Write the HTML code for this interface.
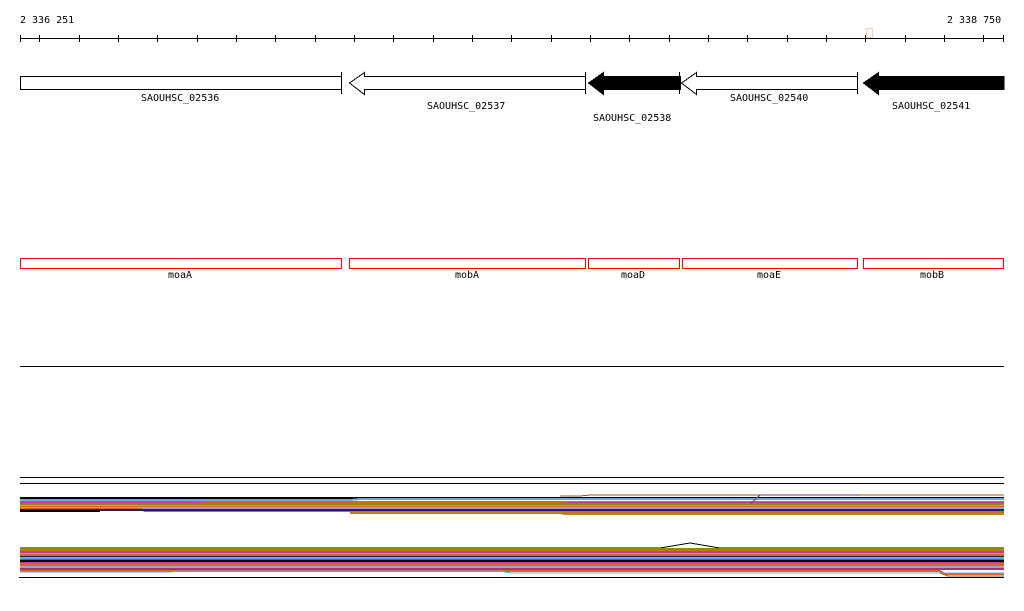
<!DOCTYPE html>
<html><head><style>
html,body{margin:0;padding:0;background:#fff;width:1024px;height:611px;overflow:hidden}
svg text{font-family:"DejaVu Sans Mono","Liberation Mono",monospace;font-size:10px;fill:#000}
</style></head><body>
<svg width="1024" height="611" xmlns="http://www.w3.org/2000/svg" shape-rendering="crispEdges">
<text x="20" y="23">2 336 251</text>
<text x="947" y="23">2 338 750</text>
<line x1="20" y1="38.5" x2="1004" y2="38.5" stroke="#000"/>
<g stroke="#000">
<line x1="20.5" y1="35" x2="20.5" y2="42"/><line x1="1003.5" y1="35" x2="1003.5" y2="42"/>
<line x1="39.5" y1="35" x2="39.5" y2="42"/><line x1="79.5" y1="35" x2="79.5" y2="42"/><line x1="118.5" y1="35" x2="118.5" y2="42"/><line x1="157.5" y1="35" x2="157.5" y2="42"/><line x1="197.5" y1="35" x2="197.5" y2="42"/><line x1="236.5" y1="35" x2="236.5" y2="42"/><line x1="275.5" y1="35" x2="275.5" y2="42"/><line x1="315.5" y1="35" x2="315.5" y2="42"/><line x1="354.5" y1="35" x2="354.5" y2="42"/><line x1="393.5" y1="35" x2="393.5" y2="42"/><line x1="433.5" y1="35" x2="433.5" y2="42"/><line x1="472.5" y1="35" x2="472.5" y2="42"/><line x1="511.5" y1="35" x2="511.5" y2="42"/><line x1="551.5" y1="35" x2="551.5" y2="42"/><line x1="590.5" y1="35" x2="590.5" y2="42"/><line x1="629.5" y1="35" x2="629.5" y2="42"/><line x1="669.5" y1="35" x2="669.5" y2="42"/><line x1="708.5" y1="35" x2="708.5" y2="42"/><line x1="747.5" y1="35" x2="747.5" y2="42"/><line x1="787.5" y1="35" x2="787.5" y2="42"/><line x1="826.5" y1="35" x2="826.5" y2="42"/><line x1="865.5" y1="35" x2="865.5" y2="42"/><line x1="905.5" y1="35" x2="905.5" y2="42"/><line x1="944.5" y1="35" x2="944.5" y2="42"/><line x1="983.5" y1="35" x2="983.5" y2="42"/>
</g>
<rect x="866.5" y="28.5" width="6" height="9" fill="none" stroke="#f4d0c8"/>
<g stroke="#000" fill="#fff">
<rect x="20.5" y="76.5" width="321" height="13"/>
<line x1="341.5" y1="72" x2="341.5" y2="94"/>
<polygon points="349.5,83 364.5,72.5 364.5,76.5 585.5,76.5 585.5,89.5 364.5,89.5 364.5,94.5"/>
<line x1="585.5" y1="72" x2="585.5" y2="94"/>
<polygon points="588.5,83 603.5,72.5 603.5,76.5 680.5,76.5 680.5,89.5 603.5,89.5 603.5,94.5" fill="#000"/>
<line x1="679.5" y1="72" x2="679.5" y2="94"/>
<polygon points="681.5,83 696.5,72.5 696.5,76.5 857.5,76.5 857.5,89.5 696.5,89.5 696.5,94.5"/>
<line x1="857.5" y1="72" x2="857.5" y2="94"/>
<polygon points="863.5,83 878.5,72.5 878.5,76.5 1004,76.5 1004,89.5 878.5,89.5 878.5,94.5" fill="#000"/>
</g>
<text x="141" y="101">SAOUHSC_02536</text>
<text x="427" y="109">SAOUHSC_02537</text>
<text x="593" y="121">SAOUHSC_02538</text>
<text x="730" y="101">SAOUHSC_02540</text>
<text x="892" y="109">SAOUHSC_02541</text>
<g stroke="#f00" fill="none">
<rect x="20.5" y="258.5" width="321" height="10"/>
<rect x="349.5" y="258.5" width="236" height="10"/>
<rect x="588.5" y="258.5" width="91" height="10"/>
<rect x="682.5" y="258.5" width="175" height="10"/>
<rect x="863.5" y="258.5" width="140" height="10"/>
</g>
<text x="168" y="278">moaA</text>
<text x="455" y="278">mobA</text>
<text x="621" y="278">moaD</text>
<text x="757" y="278">moaE</text>
<text x="920" y="278">mobB</text>
<g stroke="#000">
<line x1="20" y1="366.5" x2="1004" y2="366.5"/>
<line x1="20" y1="477.5" x2="1004" y2="477.5"/>
<line x1="20" y1="483.5" x2="1004" y2="483.5"/>
<line x1="19" y1="577.5" x2="1004" y2="577.5"/>
</g>
<g stroke-width="2" fill="none">
<path d="M20 498H1004" stroke="#000"/>
<path d="M20 500H350L360 499H1004" stroke="#6aa8e0"/>
<path d="M20 502H1004" stroke="#d2691e"/>
<path d="M20 503H200L210 504H560L570 503H1004" stroke="#c04090"/>
<path d="M20 504H1004" stroke="#8b8b10"/>
<path d="M20 506H1004" stroke="#7bd030"/>
<path d="M20 507H1004" stroke="#e06030"/>
<path d="M20 508H1004" stroke="#a0a0d0"/>
<path d="M20 509H140L145 511H350L360 512H1004" stroke="#d2691e"/>
<path d="M20 510H1004" stroke="#20205a"/>
<path d="M350 513H560L565 514H1004" stroke="#b8860b"/>
<path d="M20 511H100" stroke="#000"/>
<path d="M560 496H580L590 495H1004" stroke="#8b5a2b" stroke-width="1"/>
<path d="M750 504L760 495H860" stroke="#704060" stroke-width="1"/>
</g>
<g stroke-width="2" fill="none">
<path d="M20 548H660L690 543L720 548H1004" stroke="#000" stroke-width="1"/>
<path d="M20 549H1004" stroke="#8b8b10"/>
<path d="M20 551H1004" stroke="#d2691e"/>
<path d="M20 552H1004" stroke="#c04090"/>
<path d="M20 554H1004" stroke="#7bd030"/>
<path d="M20 555H1004" stroke="#e06030"/>
<path d="M20 557H1004" stroke="#20205a"/>
<path d="M20 558H1004" stroke="#6aa8e0"/>
<path d="M20 560H1004" stroke="#a0522d"/>
<path d="M20 561H1004" stroke="#000"/>
<path d="M20 563H1004" stroke="#c04090"/>
<path d="M20 564H1004" stroke="#d2691e"/>
<path d="M20 566H1004" stroke="#e06030"/>
<path d="M20 567H1004" stroke="#a0a0d0"/>
<path d="M20 569H1004" stroke="#b03070"/>
<path d="M20 571H940L945 574H1004" stroke="#d2691e"/>
<path d="M20 572H170L180 571H500L510 573H1004" stroke="#6aa8e0" stroke-width="1"/>
<path d="M940 573L948 576H1004" stroke="#8b5a2b" stroke-width="1"/>
</g>
</svg>
</body></html>
